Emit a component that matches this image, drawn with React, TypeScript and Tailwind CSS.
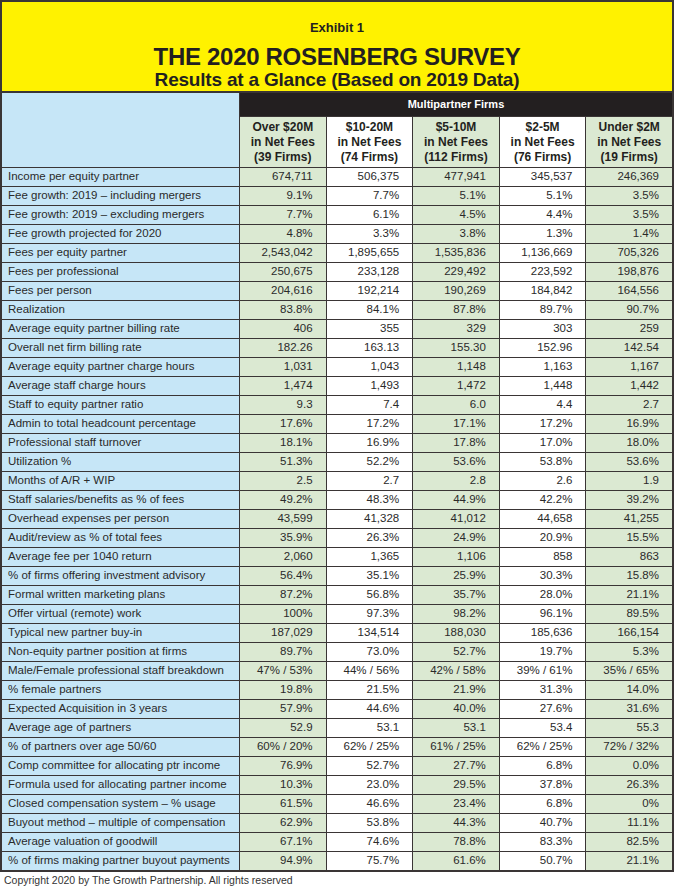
import React from 'react'

type Row = [string, string, string, string, string, string]

const COLUMNS = [
  ['Over $20M', 'in Net Fees', '(39 Firms)'],
  ['$10-20M', 'in Net Fees', '(74 Firms)'],
  ['$5-10M', 'in Net Fees', '(112 Firms)'],
  ['$2-5M', 'in Net Fees', '(76 Firms)'],
  ['Under $2M', 'in Net Fees', '(19 Firms)'],
]

const ROWS: Row[] = [
  ['Income per equity partner', '674,711', '506,375', '477,941', '345,537', '246,369'],
  ['Fee growth: 2019 – including mergers', '9.1%', '7.7%', '5.1%', '5.1%', '3.5%'],
  ['Fee growth: 2019 – excluding mergers', '7.7%', '6.1%', '4.5%', '4.4%', '3.5%'],
  ['Fee growth projected for 2020', '4.8%', '3.3%', '3.8%', '1.3%', '1.4%'],
  ['Fees per equity partner', '2,543,042', '1,895,655', '1,535,836', '1,136,669', '705,326'],
  ['Fees per professional', '250,675', '233,128', '229,492', '223,592', '198,876'],
  ['Fees per person', '204,616', '192,214', '190,269', '184,842', '164,556'],
  ['Realization', '83.8%', '84.1%', '87.8%', '89.7%', '90.7%'],
  ['Average equity partner billing rate', '406', '355', '329', '303', '259'],
  ['Overall net firm billing rate', '182.26', '163.13', '155.30', '152.96', '142.54'],
  ['Average equity partner charge hours', '1,031', '1,043', '1,148', '1,163', '1,167'],
  ['Average staff charge hours', '1,474', '1,493', '1,472', '1,448', '1,442'],
  ['Staff to equity partner ratio', '9.3', '7.4', '6.0', '4.4', '2.7'],
  ['Admin to total headcount percentage', '17.6%', '17.2%', '17.1%', '17.2%', '16.9%'],
  ['Professional staff turnover', '18.1%', '16.9%', '17.8%', '17.0%', '18.0%'],
  ['Utilization %', '51.3%', '52.2%', '53.6%', '53.8%', '53.6%'],
  ['Months of A/R + WIP', '2.5', '2.7', '2.8', '2.6', '1.9'],
  ['Staff salaries/benefits as % of fees', '49.2%', '48.3%', '44.9%', '42.2%', '39.2%'],
  ['Overhead expenses per person', '43,599', '41,328', '41,012', '44,658', '41,255'],
  ['Audit/review as % of total fees', '35.9%', '26.3%', '24.9%', '20.9%', '15.5%'],
  ['Average fee per 1040 return', '2,060', '1,365', '1,106', '858', '863'],
  ['% of firms offering investment advisory', '56.4%', '35.1%', '25.9%', '30.3%', '15.8%'],
  ['Formal written marketing plans', '87.2%', '56.8%', '35.7%', '28.0%', '21.1%'],
  ['Offer virtual (remote) work', '100%', '97.3%', '98.2%', '96.1%', '89.5%'],
  ['Typical new partner buy-in', '187,029', '134,514', '188,030', '185,636', '166,154'],
  ['Non-equity partner position at firms', '89.7%', '73.0%', '52.7%', '19.7%', '5.3%'],
  ['Male/Female professional staff breakdown', '47% / 53%', '44% / 56%', '42% / 58%', '39% / 61%', '35% / 65%'],
  ['% female partners', '19.8%', '21.5%', '21.9%', '31.3%', '14.0%'],
  ['Expected Acquisition in 3 years', '57.9%', '44.6%', '40.0%', '27.6%', '31.6%'],
  ['Average age of partners', '52.9', '53.1', '53.1', '53.4', '55.3'],
  ['% of partners over age 50/60', '60% / 20%', '62% / 25%', '61% / 25%', '62% / 25%', '72% / 32%'],
  ['Comp committee for allocating ptr income', '76.9%', '52.7%', '27.7%', '6.8%', '0.0%'],
  ['Formula used for allocating partner income', '10.3%', '23.0%', '29.5%', '37.8%', '26.3%'],
  ['Closed compensation system – % usage', '61.5%', '46.6%', '23.4%', '6.8%', '0%'],
  ['Buyout method – multiple of compensation', '62.9%', '53.8%', '44.3%', '40.7%', '11.1%'],
  ['Average valuation of goodwill', '67.1%', '74.6%', '78.8%', '83.3%', '82.5%'],
  ['% of firms making partner buyout payments', '94.9%', '75.7%', '61.6%', '50.7%', '21.1%'],
]

// shaded columns alternate green / white
const cellBg = (i: number) => (i % 2 === 0 ? 'bg-[#dbe9d2]' : 'bg-white')

export default function App() {
  return (
    <div className="w-[674px] bg-white font-['Liberation_Sans',Arial,sans-serif] text-[#231f20]">
      <div className="border-2 border-[#3a3535]">
        {/* Title block */}
        <div className="h-[91px] bg-[#fff200] border-b-2 border-[#3a3535] flex flex-col items-center pt-[18px]">
          <div className="text-[13px] font-bold leading-[16px]">Exhibit 1</div>
          <div className="text-[24px] font-bold leading-[26px] mt-[8px] tracking-[-0.3px]">
            THE 2020 ROSENBERG SURVEY
          </div>
          <div className="text-[19px] font-bold leading-[20px] tracking-[-0.2px]">
            Results at a Glance (Based on 2019 Data)
          </div>
        </div>

        {/* Table */}
        <div className="grid grid-cols-[237px_repeat(5,minmax(0,1fr))] gap-px bg-[#3a3535]">
          <div className="row-span-2 bg-[#c6e6f7]" />
          <div className="col-span-5 h-[23px] bg-[#231f20] flex items-center justify-center text-white text-[11px] font-bold">
            Multipartner Firms
          </div>
          {COLUMNS.map((lines, i) => (
            <div
              key={lines[0]}
              className={`h-[50px] flex flex-col items-center justify-center text-[12px] font-bold leading-[15px] ${cellBg(i)}`}
            >
              {lines.map(l => (
                <span key={l}>{l}</span>
              ))}
            </div>
          ))}

          {ROWS.map(row => (
            <React.Fragment key={row[0]}>
              <div className="h-[18px] bg-[#c6e6f7] pl-[6px] flex items-center text-[11.5px] text-[#2a2a2a] whitespace-nowrap">
                {row[0]}
              </div>
              {row.slice(1).map((v, i) => (
                <div
                  key={i}
                  className={`h-[18px] pr-[13px] flex items-center justify-end text-[11.5px] text-[#2a2a2a] whitespace-nowrap ${cellBg(i)}`}
                >
                  {v}
                </div>
              ))}
            </React.Fragment>
          ))}
        </div>
      </div>
      <div className="pl-[4px] pt-[1px] text-[10.5px] leading-[14px] text-[#333]">
        Copyright 2020 by The Growth Partnership. All rights reserved
      </div>
    </div>
  )
}
